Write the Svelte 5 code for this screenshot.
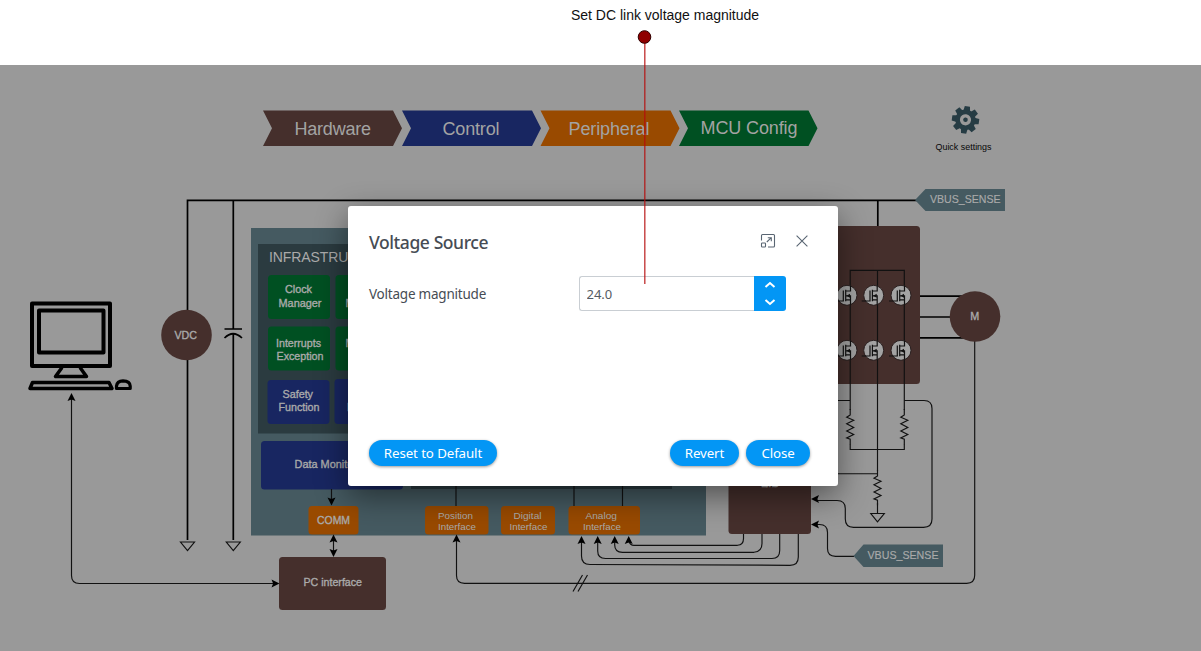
<script>
  let magnitude = $state('24.0');
  const steps = [
    { name: 'Hardware', x: 263, w: 139, c: '#452f2c', tx: 294.5, tw: 76.5, y: 135 },
    { name: 'Control', x: 402, w: 139, c: '#182661', tx: 442.5, tw: 57, y: 135 },
    { name: 'Peripheral', x: 540.5, w: 139, c: '#994a00', tx: 568.5, tw: 81, y: 135 },
    { name: 'MCU Config', x: 679, w: 138.5, c: '#005022', tx: 700.5, tw: 97, y: 134 }
  ];
  const blocks = [
    { x: 268, y: 275, w: 62, h: 44, c: '#005022' },
    { x: 335.5, y: 275, w: 62, h: 44, c: '#005022' },
    { x: 268, y: 326.5, w: 62, h: 44, c: '#005022' },
    { x: 335.5, y: 326.5, w: 62, h: 44, c: '#005022' },
    { x: 267.5, y: 380, w: 62, h: 44, c: '#182661' },
    { x: 334.5, y: 379, w: 62, h: 45, c: '#182661' },
    { x: 261, y: 441, w: 142, h: 48.5, c: '#182661' },
    { x: 308.5, y: 506, w: 50, h: 28.5, c: '#994a00' },
    { x: 425, y: 506, w: 63.5, h: 28.5, c: '#994a00' },
    { x: 501, y: 506, w: 54, h: 28.5, c: '#994a00' },
    { x: 568.5, y: 506, w: 71.5, h: 28.5, c: '#994a00' },
    { x: 279, y: 557, w: 107, h: 53, c: '#452f2c' },
    { x: 728.5, y: 440, w: 82.5, h: 94, c: '#452f2c' },
    { x: 780, y: 226, w: 140, h: 158, c: '#452f2c' }
  ];
  const labels = [
    ['Clock', 285, 293, 27], ['Manager', 278.5, 307, 43],
    ['Interrupts', 276, 347, 45], ['Exception', 276.5, 360, 47],
    ['Safety', 282.5, 398, 30.5], ['Function', 278.5, 411, 41],
    ['M', 345.5, 307, 9], ['M', 345.5, 347, 9], ['P', 347, 411, 7],
    ['Data Monitoring', 294.5, 468, 77], ['PC interface', 303.5, 586, 58.5]
  ];
  const small = [
    ['Position', 438, 519, 35], ['Interface', 438, 530, 38],
    ['Digital', 513.5, 519, 28], ['Interface', 509.5, 530, 38],
    ['Analog', 585.5, 519, 31.5], ['Interface', 583, 530, 38]
  ];
  const fets = [847, 873.7, 901].flatMap((x) => [[x, 295.3], [x, 350.3]]);
  const arrows = [
    [71.5, 393, 0], [279.5, 583.5, 90], [331.5, 505.5, 180], [333.5, 534.5, 0], [333.5, 557, 180],
    [456.5, 534.5, 0], [581.5, 536, 0], [597.7, 536, 0], [614.7, 536, 0], [628.7, 536, 0],
    [811, 499, 270], [811, 524.5, 270]
  ];
  const resistors = [[850.2, 409], [904.3, 409], [877.5, 470]];
  const bump = (d) => { magnitude = (parseFloat(magnitude) + d).toFixed(1); };
</script>

<div class="page">
  <header>Set DC link voltage magnitude</header>
  <main>
    <svg class="diagram" width="1201" height="586" viewBox="0 65 1201 586">
      {#each steps as s}
        <path d="M{s.x} 110.5h{s.w - 9}l9 17.7l-9 17.8h{9 - s.w}l9 -17.8z" fill={s.c} />
        <text class="step" x={s.tx} y={s.y} textLength={s.tw}>{s.name}</text>
      {/each}

      <g transform="translate(965.5 119.8) rotate(8)">
        {#each [0, 45, 90, 135, 180, 225, 270, 315] as a}
          <path d="M-2.6 -13.6h5.2l.8 5h-6.8z" fill="#263c44" transform="rotate({a})" />
        {/each}
        <circle r="7.9" fill="none" stroke="#263c44" stroke-width="4.6" />
        <circle r="2.3" fill="#263c44" />
      </g>
      <text class="quick" x="935.5" y="150" textLength="56" lengthAdjust="spacingAndGlyphs">Quick settings</text>

      <g class="heavy">
        <path d="M187.5 540V200.3H918M233.3 200V329M233.3 333.5V540M877.8 200V227" />
        <path d="M224.5 329H242M224.5 338Q233 329.5 242 338" />
        <path d="M919 296.2H965M919 317H952M919 337.8H965" />
      </g>
      <g class="wire">
        <path d="M180.5 542h14l-7 8.5zM226.3 542h14l-7 8.5z" fill="#999" />
      </g>
      <circle cx="186.5" cy="335" r="25.3" fill="#452f2c" />
      <text class="label" x="174.5" y="339" textLength="22.5" lengthAdjust="spacingAndGlyphs">VDC</text>

      <g class="computer">
        <rect x="32" y="303.5" width="78" height="62.5" stroke-width="4" />
        <rect x="39" y="310.5" width="64.5" height="42" stroke-width="4" />
        <path d="M62 367.5L55.5 376.5H86.5L80 367.5" stroke-width="3.5" />
        <path d="M32.5 382.5H109L112 388.5H30z" stroke-width="3.5" />
        <path d="M116.5 388.5V386Q117 381 123 380.8Q130 381 130.2 386V388.5z" stroke-width="3.2" />
      </g>

      <rect x="251" y="228" width="455" height="307.5" fill="#455a61" />
      <rect x="258" y="244" width="414" height="189.5" fill="#2b3b40" />
      <rect x="411" y="441" width="261" height="48" fill="#2b3b40" />
      <text class="infra" x="269" y="262">INFRASTRUCTURE</text>
      <path class="wire" d="M456 485V507M574 485V507M622.5 485V507" />
      {#each blocks as b}
        <rect x={b.x} y={b.y} width={b.w} height={b.h} rx="3.5" fill={b.c} />
      {/each}
      {#each labels as [t, x, y, w]}
        <text class="label" {x} {y} textLength={w} lengthAdjust="spacingAndGlyphs">{t}</text>
      {/each}
      {#each small as [t, x, y, w]}
        <text class="small" {x} {y} textLength={w} lengthAdjust="spacingAndGlyphs">{t}</text>
      {/each}
      <text class="label" x="317" y="524" textLength="33" lengthAdjust="spacingAndGlyphs">COMM</text>
      <text class="label" x="761" y="486.5" textLength="18">EMC</text>

      <g class="wire">
        <path d="M71.5 398V575.5Q71.5 583.5 79.5 583.5H274" />
        <path d="M331.5 489V500M333.5 539V552" />
        <path d="M456.5 540V575.5Q456.5 583.3 464.5 583.3H966.7Q974.7 583.3 974.7 575.3V341" />
        <path d="M573 591.5L582.5 575M578 591.5L587.5 575" />
        <path d="M581.5 541V556Q581.5 564.5 590 564.5L790 565.3Q798.3 565.3 798.3 557V534" />
        <path d="M597.7 541V551Q597.7 558.5 605.5 558.5H772Q779.7 558.5 779.7 550.5V534" />
        <path d="M614.7 541V545Q614.7 552.3 622.5 552.3H754Q762 551.5 762 543.5V534" />
        <path d="M628.7 541Q630 545.3 634 545.3H737.5Q743.5 545 743.5 538.5V534" />
        <path d="M816 500.5H837Q845.3 500.5 845.3 508.5V519Q845.3 527.3 853.5 527.3H923.5Q932 527.3 932 519V408.5Q932 400.5 924 400.5H904.3" />
        <path d="M816 524.5H819.5Q827.5 524.5 827.5 532.5V548.5Q827.5 556.3 835.5 556.3H854" />
        <path d="M850.2 410V270.3H904.3V410M850.2 444V449.5H904.3V444M877.5 270V471M877.5 503V513.5M838 400.5H850.5M838 473.7H877.5" />
        <path d="M870.8 513.5H884.3L877.5 521.8z" />
        {#each resistors as [x, y]}
          <path d="M{x} {y}v6l-3.5 2.2l7 3l-7 3.6l7 3.6l-7 3.6l7 3.6l-7 3.4l3.5 1.2v5" />
        {/each}
      </g>
      {#each fets as [x, y]}
        <circle cx={x} cy={y} r="10" fill="#a3a3a3" stroke="#2a2020" />
        <path d="M{x + 3.5} {y - 9.5}V{y - 4.3}H{x - 1.5}M{x - 1.5} {y + .5}H{x + 3.5}V{y + 9.5}M{x - 1.5} {y + 4.5}H{x + 3.5}M{x - 1.3} {y - 5.5}V{y + 6}M{x - 3.7} {y - 4.7}V{y + 5.7}H{x - 12}" class="fet" />
        <path d="M{x - .5} {y + .5}l3.5 -2v4z" fill="#111" />
      {/each}
      {#each arrows as [x, y, r]}
        <path d="M0 0L4 8L0 6.4L-4 8z" transform="translate({x} {y}) rotate({r})" />
      {/each}
      <circle cx="975" cy="316.5" r="25.3" fill="#452f2c" />
      <text class="label" x="970.3" y="320" textLength="9">M</text>
      <path d="M915 200L925.5 189H1005V211H925.5z" fill="#455a61" />
      <text class="sense" x="930" y="203" textLength="70.5" lengthAdjust="spacingAndGlyphs">VBUS_SENSE</text>
      <path d="M853.5 556L863.5 544.5H943V567H863.5z" fill="#455a61" />
      <text class="sense" x="867.5" y="559" textLength="71" lengthAdjust="spacingAndGlyphs">VBUS_SENSE</text>
    </svg>

    <section class="dialog">
      <div class="titlebar">
        <h1>Voltage Source</h1>
        <svg width="16" height="16" viewBox="0 0 16 16" class="tool">
          <path d="M1.5 7.5V2.5Q1.5 1.5 2.5 1.5H13.5Q14.5 1.5 14.5 2.5V13Q14.5 14 13.5 14H8" />
          <rect x="1.5" y="10" width="4" height="4" rx=".8" /><path d="M6.8 9L11.3 4.7M7.8 4.7H11.3V8.3" />
        </svg>
        <svg width="12" height="12" viewBox="0 0 12 12" class="tool x"><path d="M.6 .6L11.4 11.4M11.4 .6L.6 11.4" /></svg>
      </div>
      <div class="field">
        <label for="mag">Voltage magnitude</label>
        <div class="spin">
          <input id="mag" bind:value={magnitude} />
          <div class="buttons">
            <button aria-label="Increase" onclick={() => bump(1)}><svg width="12" height="8" viewBox="0 0 12 8"><path d="M1.5 6L6 2L10.5 6" /></svg></button>
            <button aria-label="Decrease" onclick={() => bump(-1)}><svg width="12" height="8" viewBox="0 0 12 8"><path d="M1.5 2L6 6L10.5 2" /></svg></button>
          </div>
        </div>
      </div>
      <footer>
        <button class="pill reset">Reset to Default</button>
        <button class="pill revert">Revert</button>
        <button class="pill close">Close</button>
      </footer>
    </section>
  </main>
  <svg class="pointer" width="17" height="260" viewBox="0 0 17 260">
    <path d="M8.8 8V256" stroke="#b50b0b" stroke-opacity=".8" stroke-width="1.4" />
    <circle cx="8.5" cy="9" r="6.3" fill="#8f0000" stroke="#300" />
  </svg>
</div>

<style>
  .page { position: relative; width: 1201px; height: 651px; overflow: hidden; background: #fff; font-family: "Liberation Sans", Arial, sans-serif; }
  header { height: 65px; box-sizing: border-box; padding: 7px 0 0 571px; font-size: 14px; line-height: 16px; letter-spacing: -.01px; color: #111; white-space: nowrap; }
  main { position: relative; height: 586px; background: #999; }
  .diagram { display: block; }
  .diagram text { fill: #aaa; }
  .diagram .step { font-size: 18px; fill: #a3a3a3; }
  .diagram .quick { font-size: 9.5px; fill: #080808; }
  .diagram .label { font-size: 10.8px; stroke: #aaa; stroke-width: .35px; }
  .diagram .small { font-size: 9.8px; }
  .diagram .sense { font-size: 11.5px; stroke: #aaa; stroke-width: .15px; }
  .diagram .infra { font-size: 14px; letter-spacing: -.1px; }
  .heavy { fill: none; stroke: #000; stroke-width: 1.7; }
  .wire { fill: none; stroke: #111; stroke-width: 1.15; }
  .fet { fill: none; stroke: #111; stroke-width: 1.2; }
  .computer { fill: none; stroke: #000; stroke-linejoin: round; }
  .dialog { position: absolute; left: 348px; top: 141px; width: 490px; height: 280px; box-sizing: border-box; padding: 20px 28px 20px 21px; display: flex; flex-direction: column; background: #fff; border-radius: 3px; box-shadow: 0 10px 32px rgba(0, 0, 0, .48); font-family: "Noto Sans", sans-serif; color: #464c54; }
  .titlebar { display: flex; align-items: center; height: 30px; }
  h1 { flex: 1; margin: 0; padding-top: 1px; font-size: 17.5px; line-height: 30px; font-weight: 500; letter-spacing: -.42px; }
  .tool { fill: none; stroke: #596572; stroke-width: 1.1; }
  .x { margin-left: 20px; margin-right: 2px; }
  .field { display: flex; align-items: center; margin-top: 20px; height: 35px; }
  label { width: 210px; font-size: 13.5px; letter-spacing: -.22px; white-space: nowrap; }
  .spin { display: flex; width: 207px; height: 35px; }
  input { flex: 1; min-width: 0; box-sizing: border-box; height: 35px; padding: 0 6.5px; border: 1px solid #c9ced3; border-right: 0; border-radius: 3px 0 0 3px; font: 13px "Noto Sans", sans-serif; color: #555b63; outline: 0; }
  .buttons { width: 32px; display: flex; flex-direction: column; border-radius: 0 3px 3px 0; background: #0396f5; }
  .buttons button { flex: 1; display: flex; align-items: center; justify-content: center; padding: 0; border: 0; background: none; }
  .buttons path { fill: none; stroke: #fff; stroke-width: 2; }
  footer { margin-top: auto; display: flex; gap: 7px; }
  .pill { height: 26px; padding: 0; border: 0; border-radius: 13px; background: #0396f5; color: #fff; font: 13.3px/26px "Noto Sans", sans-serif; letter-spacing: -.1px; box-shadow: 0 1px 3px rgba(0, 0, 0, .4); white-space: nowrap; }
  .reset { width: 128px; margin-right: auto; }
  .revert { width: 69px; }
  .close { width: 64px; }
  .pointer { position: absolute; left: 636px; top: 28px; pointer-events: none; }
</style>
